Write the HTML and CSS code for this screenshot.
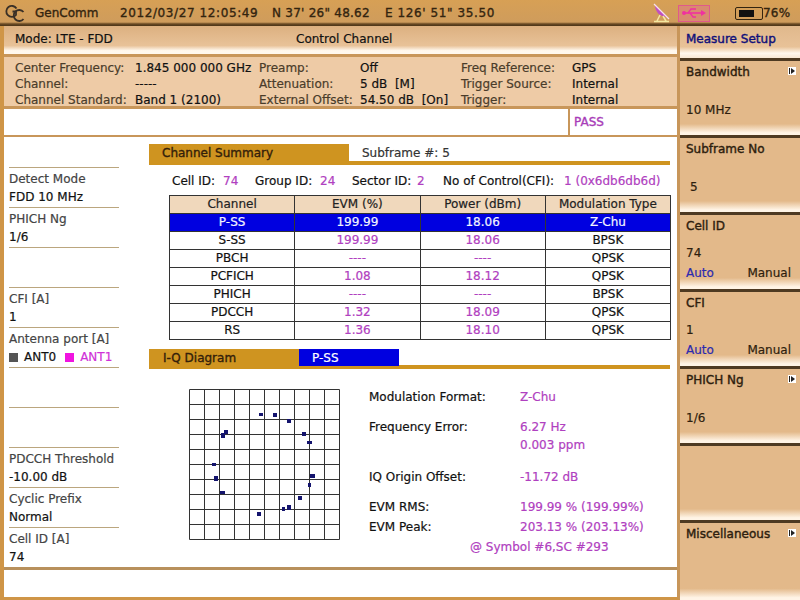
FILE: index.html
```html
<!DOCTYPE html>
<html lang="en">
<head>
  <meta charset="UTF-8">
  <title>GenComm - Control Channel</title>
  <link rel="stylesheet" href="styles.css">
</head>
<body>
  <header class="topbar">
    <svg class="logo" width="32" height="24" viewBox="0 0 32 24">
      <path d="M13.5 7.5 A5.5 5.5 0 1 0 13 14 V10.5 H9.5" fill="none" stroke="#3a3026" stroke-width="1.8"/>
      <path d="M20.5 11 A5.5 5.5 0 1 0 20.5 18" fill="none" stroke="#3a3026" stroke-width="1.8"/>
    </svg>
    <span class="brand">GenComm</span>
    <span class="clock">2012/03/27 12:05:49</span>
    <span class="lat">N 37' 26" 48.62</span>
    <span class="lon">E 126' 51" 35.50</span>
    <svg class="dish" width="20" height="20" viewBox="0 0 20 20">
      <path d="M3 2 C3 9 8 14 15 14 Z" fill="#c050c0"/>
      <path d="M8 12 L5 18 M11 13 L14 18 M2 18.5 H17" stroke="#f4e8a0" stroke-width="1.5" fill="none"/>
      <path d="M2 1 L17 16" stroke="#f8e0f0" stroke-width="1.2"/>
    </svg>
    <span class="usb">
      <svg width="26" height="12" viewBox="0 0 26 12">
        <path d="M2 6 H23" stroke="#f030a0" stroke-width="1.6"/>
        <path d="M20 3 L25 6 L20 9 Z" fill="#f030a0"/>
        <path d="M7 6 L10 2 H15 M9 6 L12 10 H15" stroke="#f030a0" stroke-width="1.4" fill="none"/>
        <circle cx="3" cy="6" r="2" fill="#f030a0"/>
      </svg>
    </span>
    <span class="battery"><span class="battery-fill"></span></span>
    <span class="percent">76%</span>
  </header>

  <div class="screen">
    <div class="left-col">
      <div class="mode-bar">
        <span class="mode">Mode: LTE - FDD</span>
        <span class="mode-title">Control Channel</span>
      </div>

      <div class="info-panel">
        <span class="lbl">Center Frequency:</span><span>1.845 000 000 GHz</span>
        <span class="lbl">Preamp:</span><span>Off</span>
        <span class="lbl">Freq Reference:</span><span>GPS</span>
        <span class="lbl">Channel:</span><span>-----</span>
        <span class="lbl">Attenuation:</span><span>5 dB&nbsp; [M]</span>
        <span class="lbl">Trigger Source:</span><span>Internal</span>
        <span class="lbl">Channel Standard:</span><span>Band 1 (2100)</span>
        <span class="lbl">External Offset:</span><span>54.50 dB&nbsp; [On]</span>
        <span class="lbl">Trigger:</span><span>Internal</span>
      </div>

      <div class="status-row">
        <div class="status-msg"></div>
        <div class="status-pass">PASS</div>
      </div>

      <div class="workarea">
        <aside class="sidebar">
          <div class="side-item"></div>
          <div class="side-item"><span class="side-lbl">Detect Mode</span><span>FDD 10 MHz</span></div>
          <div class="side-item"><span class="side-lbl">PHICH Ng</span><span>1/6</span></div>
          <div class="side-item"></div>
          <div class="side-item"><span class="side-lbl">CFI [A]</span><span>1</span></div>
          <div class="side-item">
            <span class="side-lbl">Antenna port [A]</span>
            <span class="ant"><i class="sw sw-gray"></i>ANT0<i class="sw sw-pink"></i><b>ANT1</b></span>
          </div>
          <div class="side-item"></div>
          <div class="side-item"></div>
          <div class="side-item"><span class="side-lbl">PDCCH Threshold</span><span>-10.00 dB</span></div>
          <div class="side-item"><span class="side-lbl">Cyclic Prefix</span><span>Normal</span></div>
          <div class="side-item"><span class="side-lbl">Cell ID [A]</span><span>74</span></div>
        </aside>

        <main class="content">
          <div class="tab-head summary-head">
            <span class="tab">Channel Summary</span>
            <span class="subframe">Subframe #: 5</span>
          </div>

          <div class="ids">
            <span class="id-a">Cell ID:</span><b class="id-b">74</b>
            <span class="id-c">Group ID:</span><b class="id-d">24</b>
            <span class="id-e">Sector ID:</span><b class="id-f">2</b>
            <span class="id-g">No of Control(CFI):</span><b class="id-h">1 (0x6db6db6d)</b>
          </div>

          <table class="summary">
            <tr><th>Channel</th><th>EVM (%)</th><th>Power (dBm)</th><th>Modulation Type</th></tr>
            <tr class="selected"><td>P-SS</td><td>199.99</td><td>18.06</td><td>Z-Chu</td></tr>
            <tr><td>S-SS</td><td class="val">199.99</td><td class="val">18.06</td><td>BPSK</td></tr>
            <tr><td>PBCH</td><td class="val">----</td><td class="val">----</td><td>QPSK</td></tr>
            <tr><td>PCFICH</td><td class="val">1.08</td><td class="val">18.12</td><td>QPSK</td></tr>
            <tr><td>PHICH</td><td class="val">----</td><td class="val">----</td><td>BPSK</td></tr>
            <tr><td>PDCCH</td><td class="val">1.32</td><td class="val">18.09</td><td>QPSK</td></tr>
            <tr><td>RS</td><td class="val">1.36</td><td class="val">18.10</td><td>QPSK</td></tr>
          </table>

          <div class="tab-head iq-head">
            <span class="tab tab-iq">I-Q Diagram</span>
            <span class="tab-blue">P-SS</span>
          </div>

          <div class="iq-row">
            <svg class="iq-plot" width="151" height="151" viewBox="0 0 151 151">
              <path stroke="#333" stroke-width="1" fill="none" d="M.5 .5H150.5V150.5H.5ZM.5 15.5H150.5M.5 30.5H150.5M.5 45.5H150.5M.5 60.5H150.5M.5 75.5H150.5M.5 90.5H150.5M.5 105.5H150.5M.5 120.5H150.5M.5 135.5H150.5M15.5 .5V150.5M30.5 .5V150.5M45.5 .5V150.5M60.5 .5V150.5M75.5 .5V150.5M90.5 .5V150.5M105.5 .5V150.5M120.5 .5V150.5M135.5 .5V150.5"/>
              <g fill="#14146e">
                <rect x="70" y="24" width="4" height="3"/><rect x="84" y="24" width="4" height="4"/>
                <rect x="98" y="30" width="4" height="4"/><rect x="113" y="43" width="4" height="4"/>
                <rect x="118" y="52" width="5" height="3"/><rect x="121" y="85" width="5" height="4"/>
                <rect x="119" y="94" width="3" height="4"/><rect x="109" y="107" width="4" height="4"/>
                <rect x="98" y="116" width="4" height="5"/><rect x="93" y="118" width="3" height="4"/>
                <rect x="68" y="123" width="4" height="4"/><rect x="31" y="102" width="5" height="3"/>
                <rect x="25" y="87" width="4" height="5"/><rect x="23" y="74" width="4" height="3"/>
                <rect x="32" y="44" width="4" height="5"/><rect x="35" y="41" width="4" height="4"/>
              </g>
            </svg>
            <div class="details">
              <div class="detail d-30"><span>Modulation Format:</span><b>Z-Chu</b></div>
              <div class="detail d-18"><span>Frequency Error:</span><b>6.27 Hz</b></div>
              <div class="detail d-32"><span></span><b>0.003 ppm</b></div>
              <div class="detail d-30"><span>IQ Origin Offset:</span><b>-11.72 dB</b></div>
              <div class="detail d-20"><span>EVM RMS:</span><b>199.99 % (199.99%)</b></div>
              <div class="detail d-20"><span>EVM Peak:</span><b>203.13 % (203.13%)</b></div>
              <div class="symbol">@ Symbol #6,SC #293</div>
            </div>
          </div>
        </main>
      </div>

      <div class="footer-strip"></div>
    </div>

    <nav class="softkeys">
      <div class="menu-title">Measure Setup</div>
      <div class="key"><span class="key-name">Bandwidth</span><i class="more"></i><span class="key-val">10 MHz</span></div>
      <div class="key"><span class="key-name">Subframe No</span><span class="key-val key-indent">5</span></div>
      <div class="key key-tight">
        <span class="key-name">Cell ID</span><span class="key-val">74</span>
        <span class="auto-row"><span class="auto">Auto</span><span>Manual</span></span>
      </div>
      <div class="key key-tight">
        <span class="key-name">CFI</span><span class="key-val">1</span>
        <span class="auto-row"><span class="auto">Auto</span><span>Manual</span></span>
      </div>
      <div class="key"><span class="key-name">PHICH Ng</span><i class="more"></i><span class="key-val">1/6</span></div>
      <div class="key"></div>
      <div class="key"><span class="key-name">Miscellaneous</span><i class="more"></i></div>
    </nav>
  </div>
</body>
</html>
```

FILE: styles.css
```css
* {
  box-sizing: border-box;
}
html, body {
  margin: 0;
  padding: 0;
}
body {
  width: 800px;
  height: 600px;
  overflow: hidden;
  background: #fff;
  color: #111;
  font-family: "DejaVu Sans", sans-serif;
  font-size: 12px;
  line-height: 14px;
  -webkit-text-stroke: 0.2px;
}

/* top status bar */
.topbar {
  display: flex;
  align-items: center;
  height: 26px;
  padding-left: 3px;
  background: linear-gradient(#d7a055, #cf9c5c 85%, #6a4a24 92%, #4a3418);
  color: #33240f;
  -webkit-text-stroke: 0.35px;
  white-space: nowrap;
}
.topbar > * {
  flex: none;
}
.logo {
  width: 32px;
}
.brand {
  width: 85px;
}
.clock {
  width: 152px;
  letter-spacing: 0.6px;
}
.lat {
  width: 113px;
  letter-spacing: 0.25px;
}
.lon {
  width: 267px;
  letter-spacing: 0.6px;
}
.dish {
  margin-right: 6px;
}
.usb {
  display: flex;
  align-items: center;
  justify-content: center;
  width: 32px;
  height: 17px;
  background: #d98a70;
  border: 1px solid #e05a8a;
  margin-right: 25px;
}
.battery {
  width: 28px;
  height: 13px;
  padding: 2px 8px 2px 3px;
  border: 1px solid #33240f;
  border-radius: 2px;
}
.battery-fill {
  display: block;
  height: 100%;
  background: #111;
}
.percent {
  letter-spacing: 0.2px;
}

.screen {
  display: flex;
  height: 574px;
}
.left-col {
  width: 680px;
  height: 574px;
  border-left: 4px solid #cf9547;
  border-right: 3px solid #c8965a;
  border-bottom: 3px solid #cf9547;
}

.mode-bar {
  display: flex;
  height: 31px;
  padding: 6px 0 0 11px;
  background: linear-gradient(#dcb080, #e8c298 70%, #fff8ee 88%);
  border-bottom: 3px solid #c8965a;
}
.mode {
  width: 281px;
}
.info-panel {
  display: grid;
  grid-template-columns: 120px 124px 101px 101px 111px 1fr;
  grid-template-rows: 17px 16px 15px;
  align-items: center;
  height: 52px;
  padding: 2px 0 0 11px;
  background: #eecba6;
  border-bottom: 3px solid #c8965a;
  white-space: nowrap;
}
.lbl {
  color: #4a3c2a;
}
.status-row {
  display: flex;
  height: 28px;
  border-bottom: 2px solid #c8965a;
}
.status-msg {
  width: 566px;
  border-right: 2px solid #c8965a;
}
.status-pass {
  flex: 1;
  padding: 6px 0 0 4px;
  color: #a83cb8;
  -webkit-text-stroke: 0.35px;
}

.workarea {
  display: flex;
  height: 433px;
  border-bottom: 3px solid #b8905c;
}
.sidebar {
  width: 115px;
  padding-left: 5px;
  flex: none;
}
.side-item {
  display: flex;
  flex-direction: column;
  width: 110px;
  height: 40px;
  padding-top: 2px;
  border-bottom: 1px solid #bba67e;
  white-space: nowrap;
}
.side-item:first-child {
  height: 31px;
}
.side-item:last-child {
  border-bottom: 0;
}
.side-item span {
  height: 18px;
  line-height: 18px;
}
.side-lbl {
  color: #444;
}
.ant {
  display: flex;
  align-items: center;
}
.sw {
  width: 9px;
  height: 9px;
  margin-right: 6px;
}
.sw-gray {
  background: #555;
}
.sw-pink {
  margin-left: 9px;
  background: #f014e0;
}
.ant b {
  font-weight: normal;
  color: #d030d8;
}

.content {
  flex: 1;
  padding: 7px 0 0 30px;
}
.tab-head {
  display: flex;
  width: 521px;
  border-bottom: 4px solid #cf9420;
}
.tab {
  background: #cf9420;
  color: #33200a;
  padding-left: 13px;
  -webkit-text-stroke: 0.35px;
}
.summary-head {
  height: 21px;
}
.summary-head .tab {
  width: 200px;
  height: 21px;
  line-height: 18px;
}
.subframe {
  padding-left: 13px;
  line-height: 18px;
  color: #333;
}
.ids {
  display: flex;
  height: 30px;
  padding: 9px 0 0 23px;
  white-space: nowrap;
}
.ids b {
  font-weight: normal;
  color: #b040c0;
}
.id-a { width: 51px; }
.id-b { width: 32px; }
.id-c { width: 65px; }
.id-d { width: 32px; }
.id-e { width: 65px; }
.id-f { width: 26px; }
.id-g { width: 121px; }

.summary {
  width: 502px;
  margin-left: 20px;
  border-collapse: collapse;
  table-layout: fixed;
  text-align: center;
}
.summary th, .summary td {
  height: 18px;
  padding: 0 0 1px;
  border: 1px solid #333;
  font-weight: normal;
}
.summary th {
  background: #f0d8bc;
  color: #222;
}
.selected td {
  background: #0000e0;
  color: #f4f4ff;
}
.summary td.val {
  color: #b040c0;
}

.iq-head {
  height: 20px;
  margin-top: 9px;
}
.tab-iq {
  width: 150px;
  padding-left: 14px;
  line-height: 19px;
}
.tab-blue {
  width: 100px;
  height: 17px;
  padding-left: 13px;
  background: #0000e0;
  color: #fff;
  line-height: 19px;
}
.iq-row {
  display: flex;
  padding: 20px 0 0 40px;
}
.iq-plot {
  flex: none;
}
.details {
  margin: 1px 0 0 29px;
  white-space: nowrap;
}
.detail {
  display: flex;
}
.detail span {
  width: 151px;
  color: #111;
}
.detail b, .symbol {
  font-weight: normal;
  color: #b040c0;
}
.d-30 { height: 30px; }
.d-18 { height: 18px; }
.d-32 { height: 32px; }
.d-20 { height: 20px; }
.symbol {
  padding-left: 101px;
}
.footer-strip {
  height: 27px;
}

/* right hand soft keys */
.softkeys {
  width: 120px;
  flex: none;
  border-bottom: 3px solid #cf9547;
}
.menu-title {
  height: 32px;
  padding: 6px 0 0 6px;
  color: #10107a;
  -webkit-text-stroke: 0.4px;
  background: linear-gradient(#e0b88c, #e8c298 65%, #fff8ee 85%, #f8e8d4);
}
.key {
  position: relative;
  display: flex;
  flex-direction: column;
  height: 77px;
  padding: 4px 0 0 6px;
  color: #2e1e0e;
  border-top: 3px solid #4e3a22;
  background: linear-gradient(#e3b98a 85%, #fff4e6 97%);
}
.key:last-child {
  height: 80px;
}
.key-name {
  -webkit-text-stroke: 0.4px;
}
.key-val {
  margin-top: 24px;
}
.key-indent {
  margin-left: 4px;
}
.key-tight .key-val {
  margin-top: 13px;
}
.auto-row {
  display: flex;
  justify-content: space-between;
  width: 105px;
  margin-top: 6px;
}
.auto {
  color: #2a2ab0;
}
.more {
  position: absolute;
  top: 6px;
  right: 4px;
  width: 8px;
  height: 8px;
  background: #fff;
}
.more::before {
  content: "";
  position: absolute;
  left: 1px;
  top: 1px;
  width: 1px;
  height: 6px;
  background: #222;
}
.more::after {
  content: "";
  position: absolute;
  left: 3px;
  top: 1px;
  border-left: 4px solid #222;
  border-top: 3px solid transparent;
  border-bottom: 3px solid transparent;
}
```
